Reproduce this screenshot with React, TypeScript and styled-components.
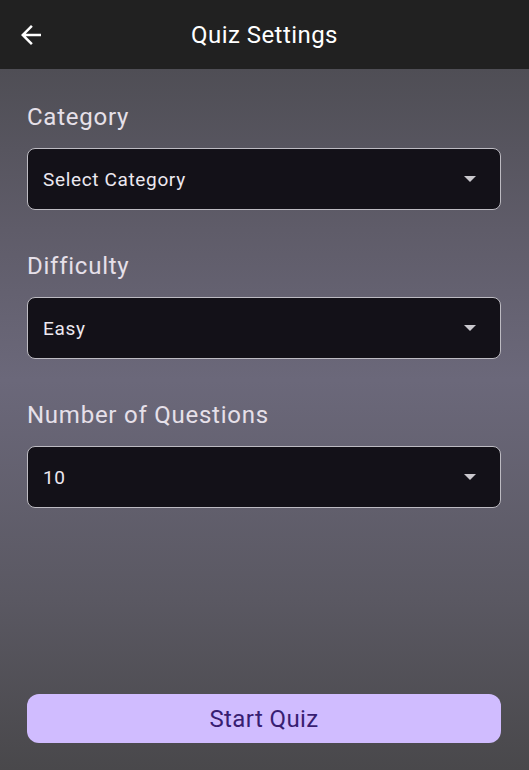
import styled, { createGlobalStyle } from "styled-components";

const GlobalStyle = createGlobalStyle`
	* {
		box-sizing: border-box;
	}
	body {
		margin: 0;
		font-family: Roboto, "Noto Sans", sans-serif;
	}
`;

const Page = styled.div`
	min-height: 100vh;
	display: flex;
	flex-direction: column;
	background: linear-gradient(180deg, #212121 0px, #212121 69px, #4f4e55 69px, #5f5c69 230px, #6b687a 380px, #5a5862 600px, #49484b 770px);
`;

const AppBar = styled.header`
	height: 69px;
	display: flex;
	align-items: center;
	position: relative;
	padding: 0 16px;
	background: #212121;
`;

const BackButton = styled.button`
	width: 30px;
	height: 30px;
	padding: 0;
	border: none;
	background: none;
	color: #ffffff;
	display: flex;
	cursor: pointer;
`;

const Title = styled.h1`
	position: absolute;
	left: 0;
	right: 0;
	margin: 0;
	text-align: center;
	font-size: 24px;
	font-weight: 400;
	letter-spacing: 0.45px;
	color: #ffffff;
	pointer-events: none;
`;

const Content = styled.main`
	flex: 1;
	display: flex;
	flex-direction: column;
	padding: 32px 28px 27px 27px;
`;

const Field = styled.section`
	display: flex;
	flex-direction: column;
	gap: 15px;
	margin-bottom: 40px;
`;

const Label = styled.label`
	font-size: 24px;
	line-height: 32px;
	letter-spacing: 0.75px;
	color: #e6e0e9;
`;

const Select = styled.div`
	height: 62px;
	display: flex;
	align-items: center;
	justify-content: space-between;
	padding: 0 24px 0 15px;
	background: #131118;
	border: 1px solid #bdbbc2;
	border-radius: 8px;
	color: #ece8f0;
	font-size: 19px;
	letter-spacing: 0.65px;
`;

const Caret = styled.span`
	width: 0;
	height: 0;
	border-left: 6px solid transparent;
	border-right: 6px solid transparent;
	border-top: 6px solid #cac8cd;
`;

const StartButton = styled.button`
	margin-top: auto;
	height: 49px;
	border: none;
	border-radius: 12px;
	background: #d0bcff;
	color: #381e72;
	font-family: Roboto, "Noto Sans", sans-serif;
	font-size: 24px;
	letter-spacing: 0.4px;
	cursor: pointer;
`;

const FIELDS = [
	{ label: "Category", value: "Select Category" },
	{ label: "Difficulty", value: "Easy" },
	{ label: "Number of Questions", value: "10" },
];

const App = () => {
	return (
		<>
			<GlobalStyle />
			<Page>
				<AppBar>
					<BackButton aria-label="Back">
						<svg width="30" height="30" viewBox="0 0 24 24" fill="currentColor">
							<path d="M20 11H7.83l5.59-5.59L12 4l-8 8 8 8 1.41-1.41L7.83 13H20v-2z" />
						</svg>
					</BackButton>
					<Title>Quiz Settings</Title>
				</AppBar>

				<Content>
					{FIELDS.map((el) => {
						return (
							<Field key={el.label}>
								<Label>{el.label}</Label>
								<Select>
									<span>{el.value}</span>
									<Caret />
								</Select>
							</Field>
						);
					})}
					<StartButton>Start Quiz</StartButton>
				</Content>
			</Page>
		</>
	);
};

export default App;
